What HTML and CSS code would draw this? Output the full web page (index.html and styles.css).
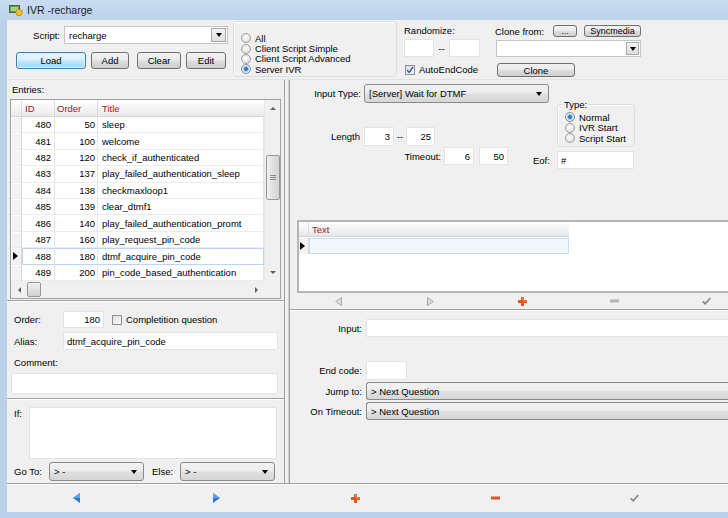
FILE: index.html
```html
<!DOCTYPE html>
<html>
<head>
<meta charset="utf-8">
<title>IVR -recharge</title>
<link rel="stylesheet" href="styles.css">
</head>
<body>
<div class="win">
  <div class="titlebar">
    <svg class="appicon" width="14" height="12" viewBox="0 0 14 12">
      <rect x="0.5" y="1.5" width="10" height="7" fill="#6a9a5b" stroke="#3f6b35"/>
      <rect x="2" y="3" width="7" height="4" fill="#a8d08d"/>
      <circle cx="10" cy="8.5" r="3.2" fill="#f2c230" stroke="#b8860b" stroke-width="0.8"/>
    </svg>
    <span class="title">IVR -recharge</span>
  </div>

  <div class="client">
    <div class="top">
      <div class="scriptcol">
        <div class="scriptrow">
          <span class="lbl script-lbl">Script:</span>
          <div class="ecombo script-combo"><span class="ev">recharge</span><span class="ddbtn"><i class="arr"></i></span></div>
        </div>
        <div class="btnrow">
          <span class="btn def load-btn">Load</span>
          <span class="btn add-btn">Add</span>
          <span class="btn clear-btn">Clear</span>
          <span class="btn edit-btn">Edit</span>
        </div>
      </div>

      <div class="group modes">
        <div class="radio"><span class="rb"></span>All</div>
        <div class="radio"><span class="rb"></span>Client Script Simple</div>
        <div class="radio"><span class="rb"></span>Client Script Advanced</div>
        <div class="radio"><span class="rb on"></span>Server IVR</div>
      </div>

      <div class="randcol">
        <div class="cap">Randomize:</div>
        <div class="randrow"><span class="tb rand-a"></span><span class="dash">--</span><span class="tb rand-b"></span></div>
        <div class="chk"><span class="cb"><svg width="8" height="8" viewBox="0 0 8 8"><path d="M1 4 L3.2 6.4 L7 1" stroke="#3a5fa8" stroke-width="1.5" fill="none"/></svg></span>AutoEndCode</div>
      </div>

      <div class="clonecol">
        <div class="clonerow"><span class="lbl clone-lbl">Clone from:</span><span class="btn sm dots-btn">...</span><span class="btn sm sync-btn">Syncmedia</span></div>
        <div class="ecombo clone-combo"><span class="ev"></span><span class="ddbtn"><i class="arr"></i></span></div>
        <span class="btn clone-btn">Clone</span>
      </div>
    </div>

    <div class="main">
      <div class="leftpane">
        <section class="entries">
          <div class="cap entcap">Entries:</div>
          <div class="grid">
            <div class="gbody">
              <div class="gtable">
                <div class="ghead"><span class="ind"></span><span class="c-id">ID</span><span class="c-ord">Order</span><span class="c-title">Title</span></div>
                <div class="grow"><span class="ind"></span><span class="c-id">480</span><span class="c-ord">50</span><span class="c-title">sleep</span></div>
                <div class="grow"><span class="ind"></span><span class="c-id">481</span><span class="c-ord">100</span><span class="c-title">welcome</span></div>
                <div class="grow"><span class="ind"></span><span class="c-id">482</span><span class="c-ord">120</span><span class="c-title">check_if_authenticated</span></div>
                <div class="grow"><span class="ind"></span><span class="c-id">483</span><span class="c-ord">137</span><span class="c-title">play_failed_authentication_sleep</span></div>
                <div class="grow"><span class="ind"></span><span class="c-id">484</span><span class="c-ord">138</span><span class="c-title">checkmaxloop1</span></div>
                <div class="grow"><span class="ind"></span><span class="c-id">485</span><span class="c-ord">139</span><span class="c-title">clear_dtmf1</span></div>
                <div class="grow"><span class="ind"></span><span class="c-id">486</span><span class="c-ord">140</span><span class="c-title">play_failed_authentication_promt</span></div>
                <div class="grow"><span class="ind"></span><span class="c-id">487</span><span class="c-ord">160</span><span class="c-title">play_request_pin_code</span></div>
                <div class="grow sel"><span class="ind"><i class="cur"></i></span><span class="c-id">488</span><span class="c-ord">180</span><span class="c-title">dtmf_acquire_pin_code</span></div>
                <div class="grow"><span class="ind"></span><span class="c-id">489</span><span class="c-ord">200</span><span class="c-title">pin_code_based_authentication</span></div>
              </div>
              <div class="vscroll">
                <span class="sbtn"><i class="sarr up"></i></span>
                <span class="vthumb"><i class="grip"></i></span>
                <span class="sfill"></span>
                <span class="sbtn"><i class="sarr down"></i></span>
              </div>
            </div>
            <div class="hscroll">
              <span class="sbtn"><i class="sarr left"></i></span>
              <span class="hthumb"></span>
              <span class="sfill"></span>
              <span class="sbtn"><i class="sarr right"></i></span>
              <span class="corner"></span>
            </div>
          </div>
        </section>

        <section class="props">
          <div class="frow order-row">
            <span class="lbl plbl">Order:</span>
            <span class="tb num order-tb">180</span>
            <div class="chk compl"><span class="cb"></span>Completition question</div>
          </div>
          <div class="frow alias-row">
            <span class="lbl plbl">Alias:</span>
            <span class="tb alias-tb">dtmf_acquire_pin_code</span>
          </div>
          <div class="cap comment-cap">Comment:</div>
          <span class="tb comment-tb"></span>
        </section>

        <section class="cond">
          <div class="ifrow">
            <span class="lbl if-lbl">If:</span>
            <span class="tb if-tb"></span>
          </div>
          <div class="frow goto-row">
            <span class="lbl goto-lbl">Go To:</span>
            <div class="dcombo goto-combo"><span class="ev">&gt; -</span><i class="arr"></i></div>
            <span class="lbl else-lbl">Else:</span>
            <div class="dcombo goto-combo"><span class="ev">&gt; -</span><i class="arr"></i></div>
          </div>
        </section>
      </div>

      <div class="splitter"></div>

      <div class="rightpane">
        <section class="upper">
          <div class="frow itype-row">
            <span class="lbl rlbl itype-lbl">Input Type:</span>
            <div class="dcombo itype-combo"><span class="ev">[Server] Wait for DTMF</span><i class="arr"></i></div>
          </div>
          <div class="mid">
            <div class="leftblock">
              <div class="frow len-row">
                <span class="lbl rlbl len-lbl">Length</span>
                <span class="tb num len-a">3</span>
                <span class="dash len-dash">--</span>
                <span class="tb num len-b">25</span>
              </div>
              <div class="frow to-row">
                <span class="lbl rlbl to-lbl">Timeout:</span>
                <span class="tb num to-a">6</span>
                <span class="tb num to-b">50</span>
              </div>
            </div>
            <div class="rightblock">
              <div class="group typebox">
                <span class="legend">Type:</span>
                <div class="radio"><span class="rb on"></span>Normal</div>
                <div class="radio"><span class="rb"></span>IVR Start</div>
                <div class="radio"><span class="rb"></span>Script Start</div>
              </div>
              <div class="frow eof-row">
                <span class="lbl eof-lbl">Eof:</span>
                <span class="tb eof-tb">#</span>
              </div>
            </div>
          </div>
          <div class="tgrid">
            <div class="thead"><span class="tind"></span><span class="tcol">Text</span></div>
            <div class="trow"><span class="tind"><i class="cur"></i></span><span class="tcell"></span></div>
          </div>
          <div class="rnav">
            <span class="ncell"><svg width="7" height="9" viewBox="0 0 7 9"><polygon points="6.5,0.5 6.5,8.5 0.7,4.5" fill="#dedede" stroke="#a8a8a8"/></svg></span>
            <span class="ncell"><svg width="7" height="9" viewBox="0 0 7 9"><polygon points="0.5,0.5 0.5,8.5 6.3,4.5" fill="#dedede" stroke="#a8a8a8"/></svg></span>
            <span class="ncell"><svg width="9" height="9" viewBox="0 0 9 9"><path d="M3 0h3v3h3v3H6v3H3V6H0V3h3z" fill="#e8501e"/><path d="M3.5 0.5h2v3h3v1h-3" fill="#f69a5a"/></svg></span>
            <span class="ncell"><svg width="9" height="4" viewBox="0 0 9 4"><rect x="0" y="0.5" width="9" height="3" fill="#b4b4b4"/></svg></span>
            <span class="ncell"><svg width="9" height="8" viewBox="0 0 9 8"><path d="M0.8 4.3 L3.2 6.8 L8.3 1" stroke="#8a8a8a" stroke-width="1.8" fill="none"/></svg></span>
          </div>
        </section>

        <section class="lower">
          <div class="frow in-row">
            <span class="lbl rlbl low-lbl">Input:</span>
            <span class="tb in-tb"></span>
          </div>
          <div class="frow end-row">
            <span class="lbl rlbl low-lbl">End code:</span>
            <span class="tb end-tb"></span>
          </div>
          <div class="frow jump-row">
            <span class="lbl rlbl low-lbl">Jump to:</span>
            <div class="dcombo wide-combo"><span class="ev">&gt; Next Question</span></div>
          </div>
          <div class="frow ot-row">
            <span class="lbl rlbl low-lbl">On Timeout:</span>
            <div class="dcombo wide-combo"><span class="ev">&gt; Next Question</span></div>
          </div>
        </section>
      </div>
    </div>

    <div class="navbar">
      <span class="bcell"><svg width="7" height="10" viewBox="0 0 7 10"><polygon points="7,0 7,10 0,5" fill="#2b78d6"/><polygon points="7,0 7,5 0,5" fill="#5aa2ec"/></svg></span>
      <span class="bcell"><svg width="7" height="10" viewBox="0 0 7 10"><polygon points="0,0 0,10 7,5" fill="#2b78d6"/><polygon points="0,0 0,5 7,5" fill="#5aa2ec"/></svg></span>
      <span class="bcell"><svg width="9" height="9" viewBox="0 0 9 9"><path d="M3 0h3v3h3v3H6v3H3V6H0V3h3z" fill="#e8501e"/><path d="M3.5 0.5h2v3h3v1h-3" fill="#f69a5a"/></svg></span>
      <span class="bcell"><svg width="9" height="4" viewBox="0 0 9 4"><rect x="0" y="0.5" width="9" height="3" fill="#e8501e"/></svg></span>
      <span class="bcell"><svg width="9" height="8" viewBox="0 0 9 8"><path d="M0.8 4.3 L3.2 6.8 L8.3 1" stroke="#8a8a8a" stroke-width="1.8" fill="none"/></svg></span>
    </div>
  </div>
</div>
</body>
</html>
```

FILE: styles.css
```css
* { box-sizing: border-box; }
html, body { margin: 0; padding: 0; }
body {
  width: 728px; height: 518px; overflow: hidden;
  background: #b9d1ea;
  font-family: "Liberation Sans", Arial, sans-serif;
  font-size: 9.5px; color: #000;
}
.win { display: flex; flex-direction: column; height: 518px; }

.titlebar {
  height: 20px; flex: none;
  display: flex; align-items: center; gap: 4px;
  padding-left: 9px;
  background: linear-gradient(#c9dcf1, #bdd3ec);
}
.title { font-size: 10.5px; color: #1a1a1a; }

.client {
  margin-left: 7px; height: 492px; flex: none;
  background: #f0f0f0;
  display: flex; flex-direction: column;
}

/* ---------- common controls ---------- */
.lbl { display: inline-flex; align-items: center; white-space: nowrap; flex: none; }
.rlbl { justify-content: flex-end; }
.cap { line-height: 11px; height: 11px; white-space: nowrap; }

.tb {
  display: flex; align-items: center; flex: none;
  background: #fff; border: 1px solid #e3e3e3;
  padding: 0 3px; white-space: nowrap; overflow: hidden;
}
.tb.num { justify-content: flex-end; }

.btn {
  display: inline-flex; align-items: center; justify-content: center; flex: none;
  height: 17px;
  border: 1px solid #707070; border-radius: 3px;
  background: linear-gradient(#f2f2f2 0%, #ebebeb 48%, #dddddd 52%, #cfcfcf 100%);
}
.btn.def {
  border-color: #3c7fb1;
  background: linear-gradient(#eaf6fd 0%, #d9f0fc 48%, #bee6fd 52%, #a7d9f5 100%);
  box-shadow: inset 0 0 0 1px #dff1fb;
}
.btn.sm { height: 12px; font-size: 9px; }

.arr {
  display: block; width: 0; height: 0;
  border-left: 3.5px solid transparent; border-right: 3.5px solid transparent;
  border-top: 4px solid #000;
}
.ecombo {
  display: flex; align-items: center; flex: none;
  background: #fff; border: 1px solid #c5c5c5;
  padding: 1px;
}
.ecombo .ev { flex: 1; padding-left: 3px; }
.ddbtn {
  width: 15px; height: 100%; flex: none;
  display: flex; align-items: center; justify-content: center;
  border: 1px solid #a9a9a9;
  background: linear-gradient(#f4f4f4, #dedede);
}
.dcombo {
  display: flex; align-items: center; flex: none;
  border: 1px solid #8a8a8a; border-radius: 3px;
  background: linear-gradient(#f3f3f3 0%, #ececec 48%, #e0e0e0 52%, #d6d6d6 100%);
  padding: 0 6px 0 4px;
}
.dcombo .ev { flex: 1; white-space: nowrap; }

.group {
  border: 1px solid #d5dfe5; border-radius: 3px;
  box-shadow: inset 1px 1px 0 #fff;
}
.radio { display: flex; align-items: center; gap: 3px; height: 10.4px; white-space: nowrap; }
.rb {
  width: 10px; height: 10px; border-radius: 50%; flex: none;
  border: 1px solid #9c9c9c;
  background: radial-gradient(circle at 45% 40%, #fdfdfd 0, #e6e6e6 60%, #cfcfcf 100%);
}
.rb.on {
  border-color: #7d8c99;
  background: radial-gradient(circle, #1f5f9c 0, #3d8fd0 1.8px, #9fd1f3 2.6px, #e9eef2 3.4px);
}
.chk { display: flex; align-items: center; gap: 4px; white-space: nowrap; }
.cb {
  width: 10px; height: 10px; flex: none;
  display: flex; align-items: center; justify-content: center;
  border: 1px solid #8f8f8f;
  background: linear-gradient(135deg, #dcdcdc, #fafafa);
}
.dash { display: inline-flex; align-items: center; justify-content: center; flex: none; }

/* ---------- top panel ---------- */
.top { height: 60px; flex: none; display: flex; align-items: flex-start; border-bottom: 1px solid #e2e2e2; }
.scriptcol { padding-left: 9px; width: 222px; flex: none; }
.scriptrow { display: flex; height: 18px; margin-top: 6px; gap: 4px; }
.script-lbl { width: 44px; justify-content: flex-end; }
.script-combo { width: 164px; height: 18px; }
.btnrow { display: flex; margin-top: 8px; }
.load-btn { width: 70px; }
.add-btn { width: 38px; margin-left: 5px; }
.clear-btn { width: 44px; margin-left: 8px; }
.edit-btn { width: 40px; margin-left: 5px; }

.modes {
  width: 164px; height: 56px; margin: 1px 0 0 4px; flex: none;
  padding: 11px 0 0 7px;
}
.modes .radio { gap: 4px; }

.randcol { margin: 5px 0 0 7px; width: 76px; flex: none; }
.randrow { display: flex; height: 18px; margin-top: 3px; }
.rand-a { width: 30px; }
.rand-b { width: 31px; }
.randrow .dash { width: 15px; }
.randcol .chk { margin-top: 7px; margin-left: 1px; height: 11px; }

.clonecol { margin: 5px 0 0 15px; width: 146px; flex: none; }
.clonerow { display: flex; height: 12px; align-items: center; }
.clone-lbl { width: 58px; }
.dots-btn { width: 24px; }
.sync-btn { width: 57px; margin-left: 7px; }
.clone-combo { width: 145px; height: 17px; margin: 3px 0 0 1px; }
.clone-combo .ddbtn { width: 13px; }
.clone-btn { width: 78px; height: 14px; margin: 6px 0 0 2px; }

/* ---------- main ---------- */
.main { height: 403px; flex: none; display: flex; }
.leftpane {
  width: 278px; flex: none; display: flex; flex-direction: column;
  border-right: 1px solid #a0a0a0;
}
.splitter { width: 4px; flex: none; border-right: 1px solid #d0d0d0; }
.rightpane {
  flex: 1; min-width: 0; display: flex; flex-direction: column;
  border-left: 1px solid #a0a0a0;
}

/* entries */
.entries { height: 221px; flex: none; border-bottom: 1px solid #a0a0a0; padding-top: 4px; }
.entcap { padding-left: 5px; }
.grid {
  margin: 4px 0 0 3px; width: 271px; height: 200px;
  border: 1px solid #a0a0a0; background: #fff;
  display: flex; flex-direction: column;
}
.gbody { display: flex; height: 181px; }
.gtable { width: 253px; flex: none; overflow: hidden; }
.ghead, .grow { display: flex; }
.ghead {
  height: 17px;
  background: linear-gradient(#ffffff, #f3f3f3 60%, #e9e9e9);
  border-bottom: 1px solid #d5d5d5;
  color: #9b2226;
}
.ghead > span { display: flex; align-items: center; border-right: 1px solid #dcdcdc; }
.ghead .c-id { padding-left: 3px; }
.ghead .c-ord { padding-left: 2px; }
.ghead .c-title { padding-left: 4px; border-right: 0; }
.grow { height: 16.4px; }
.grow > span {
  display: flex; align-items: center; white-space: nowrap; overflow: hidden;
  border-right: 1px solid #e4e4e4; border-bottom: 1px solid #ececec;
}
.ind { width: 11px; flex: none; }
.grow .ind { background: #f2f2f2; border-right-color: #d6d6d6 !important; box-shadow: inset 1px 1px 0 #fff; }
.c-id { width: 33px; flex: none; justify-content: flex-end; padding-right: 3px; }
.c-ord { width: 43px; flex: none; justify-content: flex-end; padding-right: 2px; }
.c-title { flex: 1; padding-left: 4px; }
.ghead .c-id, .ghead .c-ord { justify-content: flex-start; }
.grow.sel .c-id, .grow.sel .c-ord, .grow.sel .c-title {
  border-top: 1px solid #b9d6f2; border-bottom: 1px solid #b9d6f2;
}
.grow.sel .c-id { border-left: 1px solid #b9d6f2; }
.grow.sel .c-title { border-right: 1px solid #b9d6f2; }
.cur {
  display: block; width: 0; height: 0; margin-left: 2px;
  border-top: 4px solid transparent; border-bottom: 4px solid transparent;
  border-left: 5px solid #000;
}

.vscroll { width: 16px; flex: none; display: flex; flex-direction: column; background: #f0f0f0; border-left: 1px solid #e8e8e8; }
.sbtn { width: 16px; height: 17px; flex: none; display: flex; align-items: center; justify-content: center; }
.sfill { flex: 1; }
.vthumb {
  height: 45px; margin: 38px 0 0 1px; width: 14px; flex: none;
  border: 1px solid #979797; border-radius: 2px;
  background: linear-gradient(90deg, #f2f2f2, #e0e0e0 50%, #d3d3d3);
  display: flex; align-items: center; justify-content: center;
}
.grip { display: block; width: 6px; height: 5px; border-top: 1px solid #8a8a8a; border-bottom: 1px solid #8a8a8a; position: relative; }
.grip::after { content: ""; position: absolute; left: 0; right: 0; top: 1px; border-top: 1px solid #8a8a8a; }
.sarr { display: block; width: 0; height: 0; }
.sarr.up { border-left: 3px solid transparent; border-right: 3px solid transparent; border-bottom: 3px solid #606060; }
.sarr.down { border-left: 3px solid transparent; border-right: 3px solid transparent; border-top: 3px solid #606060; }
.sarr.left { border-top: 3px solid transparent; border-bottom: 3px solid transparent; border-right: 3px solid #606060; }
.sarr.right { border-top: 3px solid transparent; border-bottom: 3px solid transparent; border-left: 3px solid #606060; }

.hscroll { height: 17px; flex: none; display: flex; background: #f0f0f0; }
.hthumb {
  width: 14px; height: 15px; margin-top: 1px; flex: none;
  border: 1px solid #979797; border-radius: 2px;
  background: linear-gradient(#f2f2f2, #e0e0e0 50%, #d3d3d3);
}
.corner { width: 16px; flex: none; background: #f0f0f0; }

/* props */
.props { height: 98px; flex: none; border-top: 1px solid #fff; border-bottom: 1px solid #a0a0a0; padding: 9px 0 0 7px; }
.frow { display: flex; }
.plbl { width: 49px; }
.order-row { height: 17px; }
.order-tb { width: 41px; }
.compl { margin-left: 8px; }
.alias-row { height: 18px; margin-top: 4px; }
.alias-tb { width: 215px; }
.comment-cap { margin-top: 7px; }
.comment-tb { width: 267px; height: 21px; margin: 5px 0 0 -3px; }

/* cond */
.cond { flex: 1; border-top: 1px solid #fff; padding: 7px 0 0 7px; }
.ifrow { display: flex; align-items: flex-start; height: 52px; }
.if-lbl { width: 15px; margin-top: 1px; }
.if-tb { width: 248px; height: 52px; margin-left: 0; }
.goto-row { height: 19px; margin-top: 3px; align-items: center; }
.goto-lbl { width: 35px; }
.goto-combo { width: 95px; height: 19px; }
.else-lbl { width: 36px; padding-left: 8px; }

/* right upper */
.upper { height: 230px; flex: none; border-bottom: 1px solid #a0a0a0; }
.itype-row { height: 19px; margin-top: 4px; }
.itype-lbl { width: 71px; }
.itype-combo { width: 185px; height: 19px; margin-left: 3px; }
.mid { display: flex; margin-top: 1px; height: 66px; }
.leftblock { width: 240px; flex: none; }
.len-row { height: 19px; margin-top: 23px; }
.len-lbl { width: 70px; }
.len-a { width: 30px; margin-left: 4px; }
.len-dash { width: 12px; }
.len-b { width: 29px; }
.to-row { height: 18px; margin-top: 1px; }
.to-lbl { width: 151px; }
.to-a { width: 30px; margin-left: 3px; }
.to-b { width: 29px; margin-left: 5px; }
.rightblock { flex: none; width: 110px; }
.typebox {
  margin-left: 27px; width: 78px; height: 43px;
  padding: 7px 0 0 7px; position: relative;
}
.legend { position: absolute; left: 5px; top: -5px; background: #f0f0f0; padding: 0 1px; line-height: 10px; }
.typebox .radio { gap: 4px; height: 10.5px; }
.eof-row { height: 18px; margin-top: 4px; }
.eof-lbl { width: 27px; padding-left: 3px; }
.eof-tb { width: 77px; }

.tgrid {
  margin: 50px 0 0 7px; width: 440px; height: 73px;
  border: 2px solid #b5b5b5; border-right: 0; background: #fff;
}
.thead, .trow { display: flex; }
.thead { height: 15px; width: 270px; background: linear-gradient(#fff, #f1f1f1 60%, #e6e6e6); border-bottom: 1px solid #d4d4d4; color: #9b2226; }
.tind { width: 10px; flex: none; display: flex; align-items: center; border-right: 1px solid #dcdcdc; }
.trow .tind { background: #f2f2f2; }
.tcol { display: flex; align-items: center; padding-left: 3px; }
.trow { height: 16px; width: 270px; margin-top: 1px; }
.tcell { flex: 1; background: #f2f8fe; border: 1px solid #c5dcf3; }
.trow .cur { margin-left: 1px; }

.rnav { display: flex; height: 16px; margin-left: 2px; }
.ncell { width: 92px; flex: none; display: flex; align-items: center; justify-content: center; }

/* right lower */
.lower { flex: 1; border-top: 1px solid #fff; }
.low-lbl { width: 72px; }
.in-row { height: 18px; margin-top: 8px; }
.in-tb { flex: 1; margin-left: 4px; border-right: 0; }
.end-row { height: 19px; margin-top: 24px; }
.end-tb { width: 41px; margin-left: 4px; }
.jump-row { height: 18px; margin-top: 2px; }
.ot-row { height: 18px; margin-top: 2px; }
.wide-combo { flex: 1; margin-left: 4px; border-right: 0; border-radius: 3px 0 0 3px; }

/* bottom bar */
.navbar {
  height: 29px; flex: none; display: flex;
  border-top: 1px solid #a0a0a0; box-shadow: inset 0 1px 0 #fff;
}
.bcell { width: 139.5px; flex: none; display: flex; align-items: center; justify-content: center; }
```
